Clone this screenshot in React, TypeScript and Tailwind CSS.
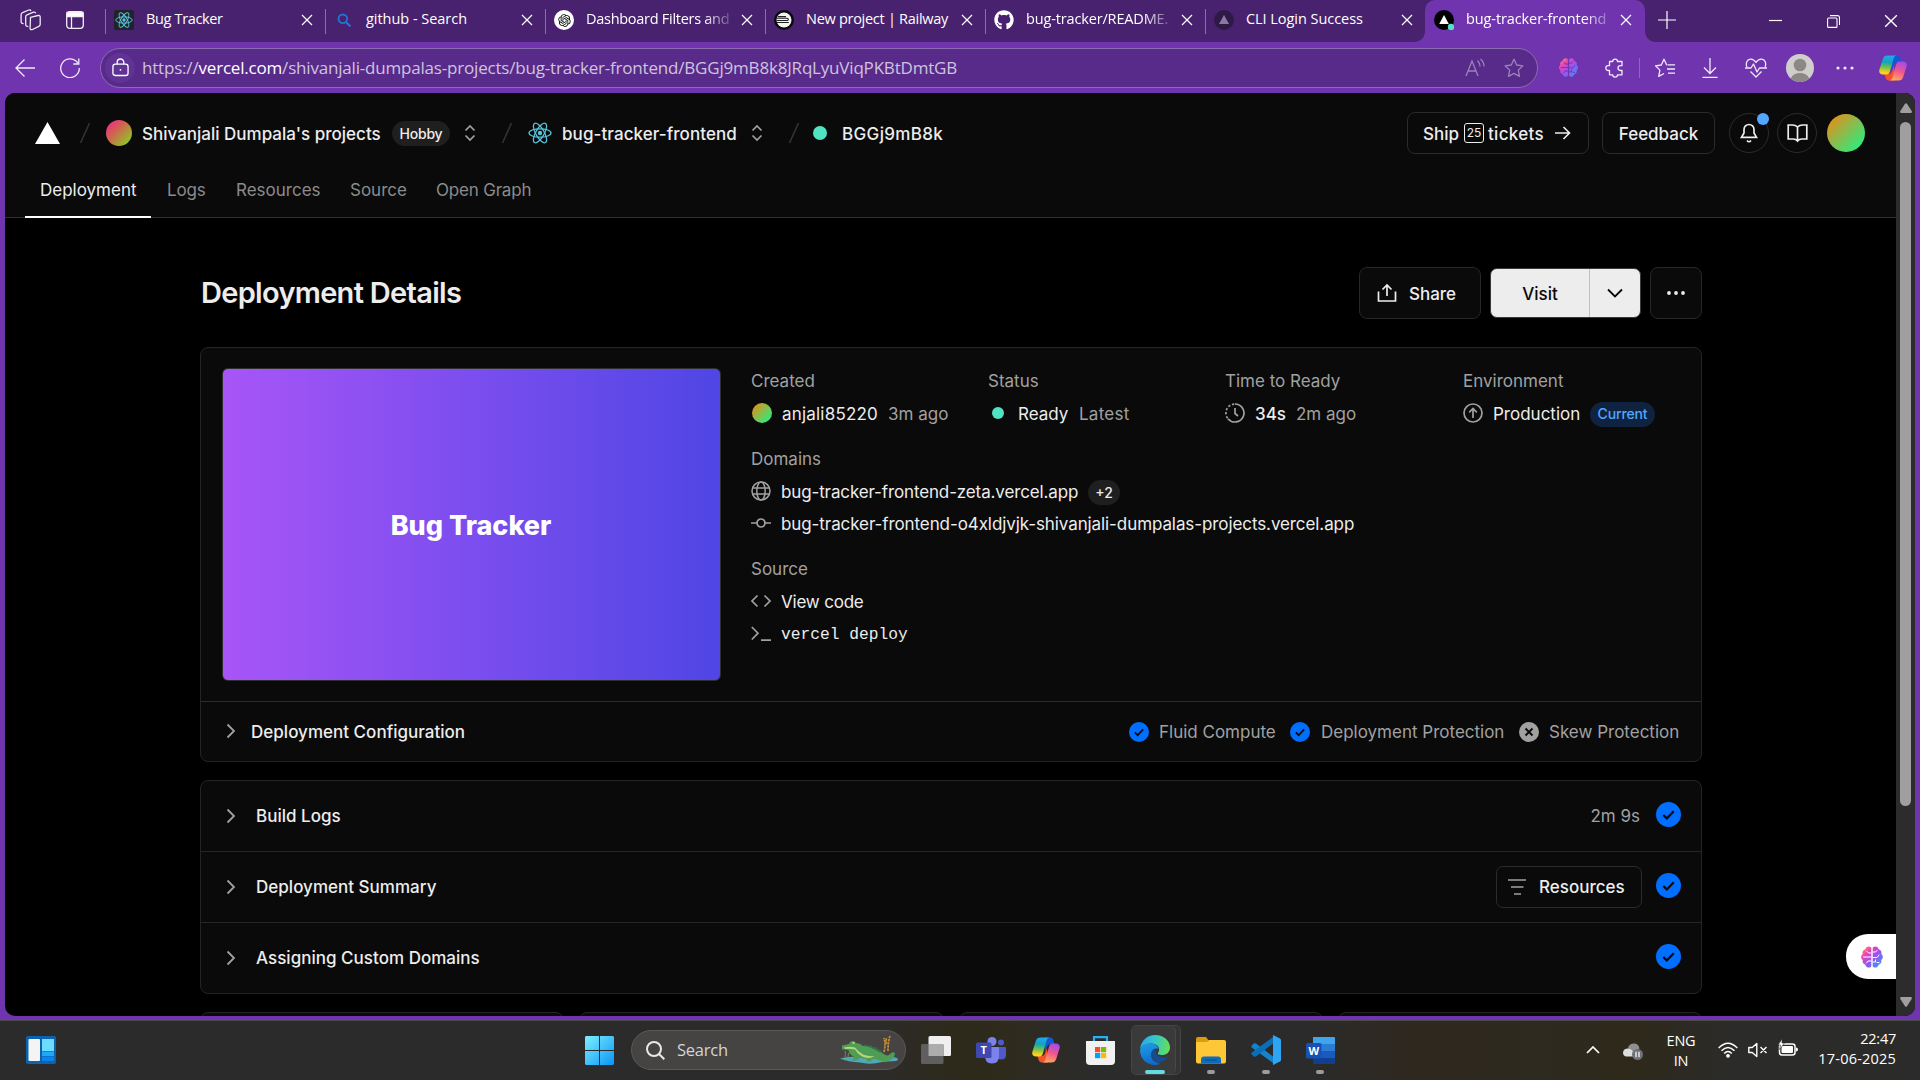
import React from 'react';
import type { ReactNode } from 'react';
import { FaGithub } from 'react-icons/fa';
import { RiOpenaiFill } from 'react-icons/ri';

type IconProps = { className?: string };

/* ---------- shared icons ---------- */

function ReactLogo({ className = '' }: IconProps) {
  return (
    <svg viewBox="0 0 24 24" className={className} fill="none" stroke="#58c4dc" strokeWidth="1.25">
      <ellipse cx="12" cy="12" rx="11" ry="4.2" />
      <ellipse cx="12" cy="12" rx="11" ry="4.2" transform="rotate(60 12 12)" />
      <ellipse cx="12" cy="12" rx="11" ry="4.2" transform="rotate(120 12 12)" />
      <circle cx="12" cy="12" r="2.2" fill="#58c4dc" stroke="none" />
    </svg>
  );
}

function CloseIcon({ className = '' }: IconProps) {
  return (
    <svg viewBox="0 0 12 12" className={className} fill="none" stroke="currentColor" strokeWidth="1.2">
      <path d="M1 1l10 10M11 1L1 11" />
    </svg>
  );
}

function BrainIcon({ className = '', line }: { className?: string; line: string }) {
  const id = 'brain' + line.slice(1);
  return (
    <svg viewBox="0 0 24 24" className={className}>
      <defs>
        <linearGradient id={id} x1="0" y1="0" x2="1" y2="1">
          <stop offset="0.05" stopColor="#ff9a3d" />
          <stop offset="0.3" stopColor="#e83fc0" />
          <stop offset="0.6" stopColor="#8a5cf0" />
          <stop offset="1" stopColor="#2aa5ff" />
        </linearGradient>
      </defs>
      <path
        fill={`url(#${id})`}
        d="M11.3 2.6C9 .4 5.8 1.6 5.4 4.2 3 4.8 2 7 2.7 9 .6 10.5.6 13.5 2.7 15c-.6 2.2.6 4.2 2.7 4.7.5 2.800 3.800 4 5.900 1.700V2.600Zm1.400 0c2.300-2.200 5.500-1 5.900 1.600 2.400.6 3.400 2.800 2.700 4.800 2.100 1.500 2.100 4.500 0 6 .6 2.200-.6 4.200-2.700 4.700-.5 2.800-3.800 4-5.900 1.700V2.600Z"
      />
      <g fill="none" stroke={line} strokeWidth="1" strokeLinecap="round">
        <path d="M11 8H8.500L6.500 6M11 12H3.500M11 16H8l-1.500 2M13 7h2.500l1.500-1.500M13 12.500h4l2-2.500M13 17h2.500v-2M17 17.500h2" />
      </g>
    </svg>
  );
}

function CopilotIcon({ className = '', id }: { className?: string; id: string }) {
  return (
    <svg viewBox="0 0 28 28" className={className}>
      <defs>
        <linearGradient id={id + 'a'} x1="0.4" y1="0" x2="0.3" y2="1">
          <stop offset="0" stopColor="#22a7f2" />
          <stop offset="0.35" stopColor="#12a5b8" />
          <stop offset="0.65" stopColor="#7fc342" />
          <stop offset="0.9" stopColor="#ffd21f" />
        </linearGradient>
        <linearGradient id={id + 'b'} x1="0.7" y1="0" x2="0.4" y2="1">
          <stop offset="0" stopColor="#a04bea" />
          <stop offset="0.5" stopColor="#f2558f" />
          <stop offset="1" stopColor="#ffa85e" />
        </linearGradient>
      </defs>
      <path fill="#1458d4" d="M12 1.500h6c2 0 3 1 3.500 3l1 3.800h-4c-2 0-3 1-3.600 3L13 16z" />
      <path fill="#f4522d" d="M16 26.500h-6c-2 0-3-1-3.500-3L5.500 20h4c2 0 3-1 3.600-3L15 12z" />
      <path
        fill={`url(#${id}a)`}
        d="M8.500 1.500H18c-1.800 0-2.800 1-3.400 3L10.900 17.500c-.6 2-1.600 3-3.400 3H4c-3 0-4.300-2-3.600-4.800L3.800 5C4.600 2.600 6 1.500 8.500 1.500Z"
      />
      <path
        fill={`url(#${id}b)`}
        d="M19.500 26.500H10c1.800 0 2.800-1 3.400-3l3.700-13c.6-2 1.600-3 3.400-3H24c3 0 4.300 2 3.600 4.800L24.200 23c-.8 2.400-2.200 3.500-4.700 3.500Z"
      />
    </svg>
  );
}

function UpDown({ className = '' }: IconProps) {
  return (
    <svg viewBox="0 0 14 18" className={className} fill="none" stroke="#a1a1a1" strokeWidth="1.700">
      <path d="M2.500 6.500L7 2l4.500 4.500M2.500 11.500L7 16l4.500-4.500" />
    </svg>
  );
}

function Slash({ className = '' }: IconProps) {
  return (
    <svg viewBox="0 0 12 22" className={className} stroke="#333333" strokeWidth="1.600">
      <path d="M10.500 1L1.500 21" />
    </svg>
  );
}

function ChevronRight({ className = '' }: IconProps) {
  return (
    <svg viewBox="0 0 10 16" className={className} fill="none" stroke="#a1a1a1" strokeWidth="1.800">
      <path d="M1.500 1.500L8 8l-6.500 6.500" />
    </svg>
  );
}

function CheckCircle({ className = '' }: IconProps) {
  return (
    <svg viewBox="0 0 24 24" className={className}>
      <circle cx="12" cy="12" r="12" fill="#006efe" />
      <path d="M7 12.500l3.400 3.300L17 8.800" fill="none" stroke="#0a0a0a" strokeWidth="2.200" />
    </svg>
  );
}

/* ---------- browser chrome ---------- */

const tabs: { title: string; textClass: string; fade?: boolean; icon: ReactNode }[] = [
  {
    title: 'Bug Tracker',
    textClass: 'tracking-[-0.35px]',
    icon: (
      <span className="flex size-5 items-center justify-center rounded-[2px] bg-[#20232a]">
        <ReactLogo className="size-[18px]" />
      </span>
    ),
  },
  {
    title: 'github - Search',
    textClass: 'tracking-[-0.03px]',
    icon: (
      <svg viewBox="0 0 20 20" className="size-5" fill="none" stroke="#1a78d6" strokeWidth="1.800">
        <circle cx="8.800" cy="8.800" r="4.300" />
        <path d="M12 12l4.500 4.500" strokeWidth="2.200" />
      </svg>
    ),
  },
  {
    title: 'Dashboard Filters and',
    textClass: 'tracking-[-0.28px]',
    fade: true,
    icon: (
      <span className="flex size-5 items-center justify-center rounded-full bg-white">
        <RiOpenaiFill className="size-[15px] text-black" />
      </span>
    ),
  },
  {
    title: 'New project | Railway',
    textClass: 'tracking-[-0.28px]',
    icon: (
      <svg viewBox="0 0 20 20" className="size-5">
        <circle cx="10" cy="10" r="10" fill="#0b0b0b" />
        <circle cx="10" cy="10" r="7.500" fill="#f4f4f4" />
        <path d="M3 8.200h9.500c2 0 2.500 2 .5 2.300H2.600M2.800 12.500h12M4 6.600h8" stroke="#222" strokeWidth="1.100" fill="none" />
      </svg>
    ),
  },
  {
    title: 'bug-tracker/README.',
    textClass: 'tracking-[-0.15px]',
    fade: true,
    icon: <FaGithub className="size-5 text-white" />,
  },
  {
    title: 'CLI Login Success',
    textClass: 'tracking-[-0.05px]',
    icon: (
      <svg viewBox="0 0 20 20" className="size-5">
        <circle cx="10" cy="10" r="10" fill="#2f1a47" />
        <path d="M10 5l5 9H5z" fill="#8d78a5" />
      </svg>
    ),
  },
];

function TabTitle({ title, fade, textClass }: { title: string; fade?: boolean; textClass: string }) {
  return (
    <span
      className={
        'mb-0.5 ml-3 w-[146px] text-[14.5px] leading-[22px] whitespace-nowrap text-white ' +
        textClass +
        (fade ? ' [mask-image:linear-gradient(to_right,black_118px,transparent_150px)]' : '')
      }
    >
      {title}
    </span>
  );
}

function TabStrip() {
  return (
    <div className="flex h-[42px] bg-[#48226e] text-white">
      <div className="flex w-[105px] items-center pb-0.5 pl-5">
        <svg viewBox="0 0 22 22" className="size-[22px]" fill="none" stroke="#efe8f6" strokeWidth="1.300" strokeLinejoin="round">
          <path d="M10.500 8.300l7.500-1.800q2-.3 2.200 1.300v7.500q0 1.500-1.400 2l-6.300 3.200q-2 .7-2.400-1z" />
          <path d="M8.300 17.300q-2.300.4-2.600-1.300V7.800q0-1.400 1.300-1.900l6.500-2.700q1.700-.5 2.300 1.100" />
          <path d="M3.600 14.700q-2.200.2-2.500-1.500V5.700q.1-1.500 1.400-2L8.800 1q1.600-.5 2.200.9" />
        </svg>
        <svg viewBox="0 0 18 18" className="ml-6 size-[18px]" fill="none" stroke="#f3eef8" strokeWidth="1.300">
          <rect x="0.700" y="0.700" width="16.600" height="16.600" rx="3" />
          <path d="M1 1.500h16v4H1z" fill="#fff" />
          <path d="M5.500 6v11" />
        </svg>
      </div>
      {tabs.map((tab) => (
        <div key={tab.title} className="flex w-[220px] items-center">
          <span className="mt-[9px] h-[25px] w-px self-start bg-[#8a70a6]" />
          <span className="flex h-10 items-center self-start pl-2">
            {tab.icon}
            <TabTitle title={tab.title} fade={tab.fade} textClass={tab.textClass} />
            <CloseIcon className="ml-[9px] size-3" />
          </span>
        </div>
      ))}
      <div className="relative flex w-[220px] rounded-t-[10px] bg-[#6f34ae]">
        <span className="absolute bottom-0 -left-[10px] size-[10px] bg-[radial-gradient(circle_at_0_0,transparent_9.500px,#6f34ae_10px)]" />
        <span className="absolute -right-[10px] bottom-0 size-[10px] bg-[radial-gradient(circle_at_100%_0,transparent_9.500px,#6f34ae_10px)]" />
        <span className="flex h-10 items-center pl-[9px]">
          <svg viewBox="0 0 20 20" className="size-5">
            <circle cx="10" cy="10" r="10" fill="#000" />
            <path d="M10 5l4.800 9H5.200z" fill="#fff" />
            <circle cx="17" cy="17" r="3.200" fill="#50e3c2" />
          </svg>
          <TabTitle title="bug-tracker-frontend" fade textClass="tracking-[-0.1px]" />
          <CloseIcon className="ml-[8px] size-3" />
        </span>
      </div>
      <svg viewBox="0 0 18 18" className="mt-[11px] ml-[13px] size-[18px]" stroke="#fff" strokeWidth="1.200">
        <path d="M9 0v18M0 9h18" />
      </svg>
      <svg viewBox="0 0 13 13" className="mt-[14px] ml-[93px] size-[13px]" stroke="#fff" strokeWidth="1.200">
        <path d="M0 6.500h13" />
      </svg>
      <svg viewBox="0 0 13 13" className="mt-[15px] ml-[45px] size-[13px]" fill="none" stroke="#fff" strokeWidth="1.100">
        <rect x="0.600" y="3" width="9.400" height="9.400" rx="1" />
        <path d="M3 .6h7.500q2 0 2 2v7.400" />
      </svg>
      <CloseIcon className="mt-[14px] ml-[44px] size-[14px]" />
    </div>
  );
}

function Toolbar() {
  return (
    <div className="flex h-[51px] items-center bg-[#6f34ae] text-[#f1eaf8]">
      <svg viewBox="0 0 20 20" className="ml-[15px] size-5" fill="none" stroke="currentColor" strokeWidth="1.300">
        <path d="M20 10H1M9.500 1.500L1 10l8.500 8.500" />
      </svg>
      <svg viewBox="0 0 20 20" className="ml-[25px] size-5" fill="none" stroke="currentColor" strokeWidth="1.300">
        <path d="M18 5.500A9.300 9.300 0 1 0 19.300 10" />
        <path d="M18.800 .5v5.500h-5.500" />
      </svg>
      <div className="ml-[20px] flex h-10 w-[1438px] items-center rounded-full border border-[#8b6cb0] bg-[#582b8b]">
        <span className="ml-1 flex size-[30px] items-center justify-center rounded-full bg-[#603295]">
          <svg viewBox="0 0 18 20" className="h-[19px] w-[17px]" fill="none" stroke="#fff" strokeWidth="1.400">
            <rect x="1" y="6.500" width="16" height="12" rx="2.500" />
            <path d="M5.500 6.500V4.500a3.500 3.500 0 0 1 7 0v2" />
            <circle cx="9" cy="12.500" r="1" fill="#fff" stroke="none" />
          </svg>
        </span>
        <span className="ml-[7px] w-[1323px] text-[17px] tracking-[-0.19px] whitespace-nowrap text-[#cfc3de]">
          https://<span className="text-white">vercel.com</span>
          /shivanjali-dumpalas-projects/bug-tracker-frontend/BGGj9mB8k8JRqLyuViqPKBtDmtGB
        </span>
        <svg viewBox="0 0 20 20" className="size-5" fill="none" stroke="#9b82b9" strokeWidth="1.300">
          <path d="M1 18L7 3l6 15M3.200 13h7.600M12.500 2.500q2.500 2.500 2.500 6M15.500 1q3.500 3 3.500 7.500" />
        </svg>
        <svg viewBox="0 0 20 20" className="ml-[19px] size-5" fill="none" stroke="#9b82b9" strokeWidth="1.300" strokeLinejoin="round">
          <path d="M10 1.200l2.700 5.800 6.200.8-4.600 4.300 1.200 6.300-5.500-3-5.500 3 1.200-6.300L1.100 7.800l6.200-.8z" />
        </svg>
      </div>
      <BrainIcon className="ml-[20px] size-[21px]" line="#6f34ae" />
      <svg viewBox="0 0 20 20" className="ml-[26px] size-5" fill="none" stroke="currentColor" strokeWidth="1.300" strokeLinejoin="round">
        <path d="M4.500 3.500h3.200a2.400 2.400 0 0 1 4.800 0H17v4.200h-1.600a2.300 2.300 0 0 0 0 4.800H17v4.300h-4.500a2.400 2.400 0 0 1-4.800 0H4.500v-4.300H3.200a2.400 2.400 0 0 1 0-4.800h1.300z" />
      </svg>
      <span className="ml-[14px] h-5 w-px bg-[#8f66be]" />
      <svg viewBox="0 0 20 20" className="ml-[15px] size-5" fill="none" stroke="currentColor" strokeWidth="1.300" strokeLinejoin="round">
        <path d="M12 6.800h-.4L9 1.200 6.300 7l-5.800.8 4.400 4.300-1.200 6.300L9 15.500M12.500 6.800H20M12 11h8M13 15.200h7" />
      </svg>
      <svg viewBox="0 0 16 20" className="ml-[27px] h-5 w-4" fill="none" stroke="currentColor" strokeWidth="1.300">
        <path d="M8 0v15M2 9.500L8 15.500l6-6M.5 19.300h15" />
      </svg>
      <svg viewBox="0 0 22 20" className="ml-[27px] h-5 w-[22px]" fill="none" stroke="currentColor" strokeWidth="1.300" strokeLinejoin="round">
        <path d="M2 9C.3 5.500 2 1.200 5.800 1.200 8.500 1.200 10 3 11 4.500 12 3 13.500 1.200 16.200 1.200 20 1.200 21.700 5.500 20 9M0 10h6l2.500-4 3.500 8 2.500-4H22M5.500 13.500L11 19l5.500-5.500" />
      </svg>
      <svg viewBox="0 0 28 28" className="ml-[19px] size-7">
        <circle cx="14" cy="14" r="14" fill="#d0cecd" />
        <circle cx="14" cy="11" r="6.300" fill="#8b8886" />
        <path d="M4.800 24.500Q7 19 14 19t9.200 5.500A14 14 0 0 1 4.800 24.500z" fill="#8b8886" />
      </svg>
      <svg viewBox="0 0 18 4" className="ml-[22px] h-1 w-[18px]" fill="currentColor">
        <circle cx="2" cy="2" r="1.600" />
        <circle cx="9" cy="2" r="1.600" />
        <circle cx="16" cy="2" r="1.600" />
      </svg>
      <CopilotIcon className="ml-[25px] size-7" id="cpTop" />
    </div>
  );
}

/* ---------- page header ---------- */

function PageHeader() {
  return (
    <header className="h-[125px] border-b border-[#2e2e2e] bg-[#0a0a0a] text-[#ededed]">
      <div className="flex h-20 items-center text-[17px] font-medium whitespace-nowrap">
        <svg viewBox="0 0 25 22" className="ml-[30px] h-[22px] w-[25px]" fill="#fff">
          <path d="M12.500 0L25 22H0z" />
        </svg>
        <Slash className="ml-[19px] h-[22px] w-3" />
        <span className="ml-[15px] size-[26px] rounded-full bg-[linear-gradient(135deg,#f0288a_5%,#d0634f_40%,#7ee01c_100%)]" />
        <span className="ml-[10px] w-[240px] pt-1">Shivanjali Dumpala's projects</span>
        <span className="ml-[10px] flex h-[25px] w-[58px] items-center justify-center rounded-full bg-[#1f1f1f] text-[14px] tracking-[-0.2px]">
          Hobby
        </span>
        <UpDown className="ml-[13px] h-[18px] w-[14px]" />
        <Slash className="ml-[24px] h-[22px] w-3" />
        <ReactLogo className="ml-[15px] size-6" />
        <span className="ml-[10px] w-[175px] pt-1 tracking-[0.08px]">bug-tracker-frontend</span>
        <UpDown className="ml-[13px] h-[18px] w-[14px]" />
        <Slash className="ml-[24px] h-[22px] w-3" />
        <span className="ml-[13px] size-[14px] rounded-full bg-[#50e3c2]" />
        <span className="ml-[15px] w-[101px] pt-1 tracking-[0.35px]">BGGj9mB8k</span>
        <div className="ml-auto flex items-center pr-[31px]">
          <span className="flex h-[42px] w-[182px] items-center rounded-[8px] border border-[#2b2b2b] pl-[15px]">
            <span className="pt-1">Ship</span>
            <span className="ml-[5px] flex h-5 w-5 items-center justify-center rounded-[3px] border-[1.500px] border-[#ededed] text-[12px] leading-none font-normal">
              25
            </span>
            <span className="ml-1 pt-1 tracking-[0.3px]">tickets</span>
            <svg viewBox="0 0 16 16" className="ml-[11px] size-4" fill="none" stroke="currentColor" strokeWidth="1.600">
              <path d="M0 8h14.500M8.500 2l6 6-6 6" />
            </svg>
          </span>
          <span className="ml-[13px] flex h-[42px] w-[113px] items-center justify-center rounded-[8px] border border-[#2b2b2b] pt-1">
            Feedback
          </span>
          <span className="relative ml-[14px] flex size-10 items-center justify-center rounded-full border border-[#2b2b2b]">
            <svg viewBox="0 0 20 20" className="size-5" fill="none" stroke="currentColor" strokeWidth="1.700">
              <path d="M5 6.500a5 5 0 0 1 10 0V10l2.500 4.300h-15L5 10zM8 17.500q2 2.500 4 0" />
            </svg>
            <span className="absolute -top-px right-[-1px] size-3 rounded-full bg-[#52a8ff]" />
          </span>
          <span className="mr-px ml-2 flex size-10 items-center justify-center rounded-full border border-[#2b2b2b]">
            <svg viewBox="0 0 21 20" className="h-5 w-[21px]" fill="none" stroke="currentColor" strokeWidth="1.700">
              <path d="M10.500 4Q8.500 2 5.500 2H1.200v14h5Q9 16 10.500 18 12 16 14.800 16h5V2h-4.300q-3 0-5 2zM10.500 4v13.500" />
            </svg>
          </span>
          <span className="ml-[9px] size-[38px] rounded-full bg-[linear-gradient(135deg,#f08a10_5%,#8fb94a_45%,#1cf584_95%)]" />
        </div>
      </div>
      <nav className="flex h-[45px] pl-5 text-[17px] whitespace-nowrap text-[#8b8b8b]">
        <span className="h-[45px] w-[126px] border-b-2 border-white pt-[5px] pl-[15px] text-[#ededed]">Deployment</span>
        <span className="w-[68px] pt-[5px] pl-[16px] tracking-[-0.2px]">Logs</span>
        <span className="w-[115px] pt-[5px] pl-[17px]">Resources</span>
        <span className="w-[86px] pt-[5px] pl-[16px]">Source</span>
        <span className="pt-[5px] pl-[16px] tracking-[-0.2px]">Open Graph</span>
      </nav>
    </header>
  );
}

/* ---------- deployment content ---------- */

function TitleRow() {
  return (
    <div className="flex h-[52px] items-center text-[17px] font-medium whitespace-nowrap">
      <h1 className="mb-0.5 ml-px text-[29px] leading-none font-semibold tracking-[-0.7px] text-[#ededed]">
        Deployment Details
      </h1>
      <span className="ml-auto flex h-[52px] w-[122px] items-center rounded-[8px] border border-[#272727] bg-[#0a0a0a] pl-[17px] text-[#ededed]">
        <svg viewBox="0 0 20 20" className="size-5" fill="none" stroke="currentColor" strokeWidth="1.700">
          <path d="M1.500 8.500V18h17V8.500M10 13V2.500M5.500 6.500L10 2l4.500 4.500" />
        </svg>
        <span className="ml-3 pt-[3px]">Share</span>
      </span>
      <span className="ml-[9px] flex h-[50px] w-[151px] overflow-hidden rounded-[7px] border border-[#3a3a3a] bg-[#ededed] text-[#0a0a0a]">
        <span className="flex w-[99px] items-center justify-center border-r border-[#c0c0c0] pt-[3px]">Visit</span>
        <span className="flex flex-1 items-center justify-center">
          <svg viewBox="0 0 16 10" className="h-[10px] w-4" fill="none" stroke="currentColor" strokeWidth="1.800">
            <path d="M1 1.500l7 7 7-7" />
          </svg>
        </span>
      </span>
      <span className="ml-[9px] flex h-[52px] w-[52px] items-center justify-center rounded-[8px] border border-[#272727] bg-[#0a0a0a] text-[#ededed]">
        <svg viewBox="0 0 18 4" className="h-1 w-[18px]" fill="currentColor">
          <circle cx="2" cy="2" r="1.900" />
          <circle cx="9" cy="2" r="1.900" />
          <circle cx="16" cy="2" r="1.900" />
        </svg>
      </span>
    </div>
  );
}

function Field({ label, children, className = '' }: { label: string; children: ReactNode; className?: string }) {
  return (
    <div className={className}>
      <div className="h-[33px] leading-6 text-[#a1a1a1]">{label}</div>
      {children}
    </div>
  );
}

function Details() {
  return (
    <div className="ml-[30px] flex flex-col pt-[21px] text-[17px] leading-6 whitespace-nowrap text-[#ededed]">
      <div className="flex">
        <Field label="Created" className="w-[237px]">
          <div className="flex h-6 items-center">
            <span className="ml-px size-5 -translate-y-px rounded-full bg-[linear-gradient(135deg,#f08a10_5%,#8fb94a_45%,#1cf584_95%)]" />
            <span className="ml-[10px] w-[97px] tracking-[0.2px]">anjali85220</span>
            <span className="ml-[9px] text-[#a1a1a1]">3m ago</span>
          </div>
        </Field>
        <Field label="Status" className="w-[237px]">
          <div className="flex h-6 items-center">
            <span className="ml-[4px] size-3 -translate-y-px rounded-full bg-[#50e3c2]" />
            <span className="ml-[14px] w-[51px]">Ready</span>
            <span className="ml-[10px] tracking-[0.25px] text-[#a1a1a1]">Latest</span>
          </div>
        </Field>
        <Field label="Time to Ready" className="w-[238px]">
          <div className="flex h-6 items-center">
            <svg viewBox="0 0 20 20" className="size-5 -translate-y-px" fill="none" stroke="#a1a1a1" strokeWidth="1.700">
              <path d="M10 1a9 9 0 1 1-7 14.700" />
              <path d="M2.600 15.200A9 9 0 0 1 10 1" strokeDasharray="2.300 1.800" />
              <path d="M10 5v5.500l3 2.500" />
            </svg>
            <span className="ml-[10px] w-[31px] font-medium">34s</span>
            <span className="ml-[10px] text-[#a1a1a1]">2m ago</span>
          </div>
        </Field>
        <Field label="Environment">
          <div className="flex h-6 items-center">
            <svg viewBox="0 0 20 20" className="size-5 -translate-y-px" fill="none" stroke="#a1a1a1" strokeWidth="1.700">
              <circle cx="10" cy="10" r="9" />
              <path d="M10 15V5.500M6.200 9.300L10 5.500l3.800 3.800" />
            </svg>
            <span className="ml-[10px] w-[87px]">Production</span>
            <span className="ml-[10px] flex h-[25px] w-[65px] items-center justify-center rounded-full bg-[#0f2341] text-[14px] font-medium tracking-[-0.12px] text-[#52a8ff]">
              Current
            </span>
          </div>
        </Field>
      </div>
      <Field label="Domains" className="mt-[21px]">
        <div className="flex h-8 items-start">
          <svg viewBox="0 0 20 20" className="mt-[1px] size-5" fill="none" stroke="#a1a1a1" strokeWidth="1.500">
            <circle cx="10" cy="10" r="9" />
            <ellipse cx="10" cy="10" rx="4.200" ry="9" />
            <path d="M1.800 7h16.400M1.800 13h16.400" />
          </svg>
          <span className="ml-[10px] w-[298px] tracking-[-0.13px]">bug-tracker-frontend-zeta.vercel.app</span>
          <span className="ml-[9px] flex h-[25px] w-8 items-center justify-center rounded-full bg-[#1f1f1f] text-[14px] font-medium">
            +2
          </span>
        </div>
        <div className="flex h-6 items-center">
          <svg viewBox="0 0 20 20" className="size-5 -translate-y-px" fill="none" stroke="#a1a1a1" strokeWidth="1.700">
            <circle cx="10" cy="10" r="4" />
            <path d="M0 10h6M14 10h6" />
          </svg>
          <span className="ml-[10px] tracking-[-0.09px]">
            bug-tracker-frontend-o4xldjvjk-shivanjali-dumpalas-projects.vercel.app
          </span>
        </div>
      </Field>
      <Field label="Source" className="mt-[21px]">
        <div className="flex h-[33px] items-start">
          <svg viewBox="0 0 20 20" className="mt-[1px] size-5" fill="none" stroke="#a1a1a1" strokeWidth="1.700">
            <path d="M6.500 4.500L1 10l5.500 5.500M13.500 4.500L19 10l-5.500 5.500" />
          </svg>
          <span className="ml-[10px] tracking-[-0.2px]">View code</span>
        </div>
        <div className="flex h-6 items-center">
          <svg viewBox="0 0 20 20" className="size-5 -translate-y-px" fill="none" stroke="#a1a1a1" strokeWidth="1.700">
            <path d="M.8 3L7 9.200.8 15.500M10 16.200h10" />
          </svg>
          <span className="ml-[10px] font-['Liberation_Mono',monospace] text-[16.250px]">vercel deploy</span>
        </div>
      </Field>
    </div>
  );
}

function DeploymentCard() {
  return (
    <section className="mt-7 rounded-[8px] border border-[#242424] bg-[#0a0a0a]">
      <div className="flex h-[353px] pl-[21px]">
        <div className="mt-[20px] flex h-[313px] w-[499px] items-center justify-center rounded-[6px] border border-[#2e2e2e] bg-[linear-gradient(to_right,#a855f7,#4f46e5)]">
          <span className="pt-[3px] pr-px text-[27px] font-extrabold text-white">Bug Tracker</span>
        </div>
        <Details />
      </div>
      <div className="flex h-[60px] items-center border-t border-[#2b2b2b] pr-5 pl-[25px] text-[17px] whitespace-nowrap">
        <ChevronRight className="mb-px h-4 w-[10px]" />
        <span className="ml-[15px] pt-[3px] font-medium tracking-[0.02px] text-[#ededed]">Deployment Configuration</span>
        <div className="ml-auto flex items-center text-[#a1a1a1]">
          <CheckCircle className="size-5" />
          <span className="ml-[10px] w-[116px] pt-[2px]">Fluid Compute</span>
          <CheckCircle className="ml-[15px] size-5" />
          <span className="ml-[11px] w-[183px] pt-[2px]">Deployment Protection</span>
          <svg viewBox="0 0 20 20" className="ml-[15px] size-5">
            <circle cx="10" cy="10" r="10" fill="#a1a1a1" />
            <path d="M6.500 6.500l7 7M13.500 6.500l-7 7" stroke="#0a0a0a" strokeWidth="1.900" />
          </svg>
          <span className="ml-[10px] w-[132px] pt-[2px]">Skew Protection</span>
        </div>
      </div>
    </section>
  );
}

function StepRow({ title, children }: { title: string; children?: ReactNode }) {
  return (
    <div className="box-content flex h-[70px] items-center pr-5 pl-[25px] whitespace-nowrap">
      <ChevronRight className="h-4 w-[10px]" />
      <span className="ml-5 pt-[2px] font-medium tracking-[0.02px] text-[#ededed]">{title}</span>
      <div className="ml-auto flex items-center">
        {children}
        <CheckCircle className="mb-1 ml-[14px] size-[25px]" />
      </div>
    </div>
  );
}

function Steps() {
  return (
    <section className="mt-[18px] divide-y divide-[#262626] rounded-[8px] border border-[#242424] bg-[#0a0a0a] text-[17px]">
      <StepRow title="Build Logs">
        <span className="mr-[2px] pt-[2px] text-[#a1a1a1]">2m 9s</span>
      </StepRow>
      <StepRow title="Deployment Summary">
        <span className="flex h-[42px] w-[146px] items-center rounded-[7px] border border-[#2b2b2b] pl-[10px] font-medium text-[#ededed]">
          <svg viewBox="0 0 20 20" className="size-5" stroke="#a1a1a1" strokeWidth="1.700">
            <path d="M1 3h18M4 10h12.500M7 17h7" />
          </svg>
          <span className="ml-3 pt-[2px]">Resources</span>
        </span>
      </StepRow>
      <StepRow title="Assigning Custom Domains" />
    </section>
  );
}

function Scrollbar() {
  return (
    <div className="flex w-[19px] flex-col items-center bg-[#2c2c2c]">
      <svg viewBox="0 0 12 10" className="mt-[10px] h-[10px] w-3" fill="#9f9f9f">
        <path d="M5 .8q1-1 2 0l4.800 7.500q.4 1.700-1 1.700H1.200q-1.400 0-1-1.700z" />
      </svg>
      <span className="mt-[9px] h-[684px] w-[11px] rounded-full bg-[#9f9f9f]" />
      <svg viewBox="0 0 12 10" className="mt-auto mb-[9px] h-[10px] w-3" fill="#9f9f9f">
        <path d="M5 9.200q1 1 2 0l4.800-7.500Q12.200 0 10.800 0H1.200Q-.2 0 .2 1.700z" />
      </svg>
    </div>
  );
}

/* ---------- taskbar ---------- */

function WidgetsIcon() {
  return (
    <svg viewBox="0 0 30 28" className="mt-[15px] ml-[26px] h-7 w-[30px]">
      <rect width="30" height="28" rx="2" fill="#0d62b0" />
      <rect x="2.500" y="3" width="11.500" height="22" rx="1" fill="#f4f4f4" />
      <path fill="#6adcfd" d="M16 3h12v12H16z" />
      <path fill="#1fa9f5" d="M16 15.500h12v4.500H16z" />
      <path fill="#0a84ea" d="M16 20.500h12V25H16z" />
    </svg>
  );
}

function WindowsIcon() {
  return (
    <svg viewBox="0 0 29 29" className="mt-[15px] ml-[529px] size-[29px]">
      <defs>
        <linearGradient id="winlogo" x1="0" y1="0" x2="29" y2="29" gradientUnits="userSpaceOnUse">
          <stop stopColor="#7df0ff" />
          <stop offset="1" stopColor="#0a94f6" />
        </linearGradient>
      </defs>
      <path fill="url(#winlogo)" d="M1 0h13v14H0V1zM15 0h13l1 1v13H15zM0 15h14v14H1l-1-1zM15 15h14v13l-1 1H15z" />
    </svg>
  );
}

function Crocodile() {
  return (
    <svg viewBox="0 0 58 30" className="h-[30px] w-[58px]">
      <path fill="#4fa9b8" d="M0 23.500q8-2.500 18-1.500 18-2 38 .5 4 2 0 3.500-8 .5-14 1-12 3-22 .5Q8 27 0 23.500z" />
      <path fill="none" stroke="#c28f3a" strokeWidth="1.700" strokeDasharray="2.500 .7" d="M44 17q2-8 0-14M48 16q0-9 2-15M46.500 9q-.5-3 0-6" />
      <path fill="none" stroke="#6c8a3c" strokeWidth="1.200" d="M5 22q1-4 0-6M8 22q0-3 1.500-5" />
      <path
        fill="#4f9d55"
        d="M2 10.500l7-1.500q1-3 4-3 2 0 3 2 4 0 7 3 5-1 9 1.500 7 1.500 11 6 5 3.500 7 .5 2.500-3 5-1-.5 6-7 8-7 1-12-2l-4 .5-1 2h-5l1-2.500-7-1-4 2.500h-4l2-3.500q-5-3-5-6.500-3-1.500-7-1z"
      />
      <path fill="#b5d878" d="M4 12.500q6-1.500 11 0 3 4 8 7 6 2.500 12 1.500-6 3.500-13 .5-5-3-7-7-5-1-10-.5z" />
      <path fill="#2f7747" d="M23 11l2.500-1.500L28 11l3-.8 2 2.200 3-.2 1.500 2.500 3 .3 1 2.500 2.500.8q-6-.8-10-4-5-3-11-3.300z" />
      <circle cx="13.500" cy="8" r="1" fill="#f3d34a" />
    </svg>
  );
}

function TaskViewIcon() {
  return (
    <svg viewBox="0 0 30 28" className="mt-[15px] ml-[15px] h-7 w-[30px]">
      <rect x="7.500" width="22.500" height="20" rx="1.500" fill="#efefef" />
      <rect y="8" width="22.500" height="20" rx="1.500" fill="#5f5f5f" />
      <path d="M7.500 8h15v12h-15z" fill="#acacac" />
    </svg>
  );
}

function TeamsIcon() {
  return (
    <svg viewBox="0 0 30 27" className="mt-4 ml-[25px] h-[27px] w-[30px]">
      <circle cx="25" cy="5.500" r="3" fill="#5059c9" />
      <circle cx="16" cy="4.500" r="4.500" fill="#7b83eb" />
      <path d="M20 10h9q1 0 1 1v7q0 4.500-5 4.500-3 0-5-3z" fill="#5059c9" />
      <path d="M9 10h13q1 0 1 1v8q0 7.500-7 7.500T9 19z" fill="#7b83eb" />
      <rect y="5.500" width="15.500" height="15.500" rx="1.500" fill="#4147b0" />
      <text x="7.800" y="17.300" textAnchor="middle" fontSize="11" fontWeight="700" fill="#fff" fontFamily="Open Sans, sans-serif">
        T
      </text>
    </svg>
  );
}

function StoreIcon() {
  return (
    <svg viewBox="0 0 29 29" className="mt-[15px] ml-[26px] size-[29px]">
      <path d="M8 6V1.200h13V6" fill="none" stroke="#29b0ee" strokeWidth="2.200" />
      <path d="M0 5h29v20q0 4-4 4H4q-4 0-4-4z" fill="#f1f1f1" />
      <path fill="#f25022" d="M9 11h5.200v5.200H9z" />
      <path fill="#7fba00" d="M15 11h5.200v5.200H15z" />
      <path fill="#00a4ef" d="M9 17h5.200v5.200H9z" />
      <path fill="#ffb900" d="M15 17h5.200v5.200H15z" />
    </svg>
  );
}

function EdgeIcon() {
  return (
    <svg viewBox="0 0 30 30" className="size-[30px]">
      <defs>
        <linearGradient id="edgeTop" x1="0" y1="0.400" x2="1" y2="0.500">
          <stop offset="0" stopColor="#2aa8e8" />
          <stop offset="0.500" stopColor="#35c8c8" />
          <stop offset="1" stopColor="#66e052" />
        </linearGradient>
        <linearGradient id="edgeMid" x1="0.300" y1="0" x2="0.500" y2="1">
          <stop offset="0" stopColor="#1f9ae6" />
          <stop offset="1" stopColor="#0f68c8" />
        </linearGradient>
      </defs>
      <path fill="#124d96" d="M11 15q-1 8 6 13 6-.5 11-5.500.5-.8-.5-.6Q22 24 18 21q-3-2.500-2-6.500z" />
      <path fill="url(#edgeTop)" d="M0 14C1 6 7 0 15 0c9 0 15 6 15 12.500 0 5-4 7.500-8 7.500-3 0-5-.8-4-2 2.800-4 .5-9-6-9.500C6 8.300 1.500 11 0 14z" />
      <path fill="url(#edgeMid)" d="M0 15C1 10.500 6 8 11 8.500c4 .3 7 2.500 7.500 5.500-4-1.500-7.500 1.500-7.500 5.500 0 5 4 8.500 9 9-1.500 1-3.500 1.500-5 1.500C6.500 30 0 23.500 0 15z" />
    </svg>
  );
}

function ExplorerIcon() {
  return (
    <svg viewBox="0 0 30 27" className="h-[27px] w-[30px]">
      <path d="M0 2q0-2 2-2h8l3 4v5H0z" fill="#dc9a0c" />
      <path d="M0 5h11l2-2h15q2 0 2 2v19.500q0 2-2 2H2q-2 0-2-2z" fill="#fdc736" />
      <path d="M5 26.500v-4q0-3 3-3h14q3 0 3 3v4z" fill="#0f6cbd" />
      <path d="M9 23h12" stroke="#0a4a86" strokeWidth="1" />
    </svg>
  );
}

function CodeIcon() {
  return (
    <svg viewBox="0 0 30 30" className="size-[30px]">
      <path d="M.8 10.500L3 8.300l2 .2L24 23v6.500L.8 12.500q-1-1 0-2z" fill="#1483cf" />
      <path d="M.8 19.500L3 21.700l2-.2L24 7V.5L.8 17.500q-1 1 0 2z" fill="#0a6fb8" />
      <path d="M22 0l7 3.500q1 .5 1 1.500v20q0 1-1 1.500L22 30z" fill="#2da5f2" />
    </svg>
  );
}

function WordIcon() {
  return (
    <svg viewBox="0 0 29 27" className="h-[27px] w-[29px]">
      <path fill="#41a5ee" d="M7 0h21q1 0 1 1v6H7z" />
      <path fill="#2b7cd3" d="M7 7h22v7H7z" />
      <path fill="#185abd" d="M7 14h22v7H7z" />
      <path fill="#103f91" d="M7 21h22v5q0 1-1 1H8q-1 0-1-1z" />
      <rect y="6" width="15.500" height="15.500" rx="1.500" fill="#1751b3" />
      <text x="7.700" y="17.700" textAnchor="middle" fontSize="11" fontWeight="700" fill="#fff" fontFamily="Open Sans, sans-serif">
        W
      </text>
    </svg>
  );
}

function RunningApp({ children, className = '' }: { children: ReactNode; className?: string }) {
  return (
    <span className={'flex h-[45px] w-[30px] flex-col items-center ' + className}>
      <span className="flex h-[30px] items-center">{children}</span>
      <span className="mt-[5px] h-1 w-2 rounded-full bg-[#9d9b99]" />
    </span>
  );
}

function Taskbar() {
  return (
    <footer className="flex h-[60px] border-t border-[#4b4b4b] bg-[linear-gradient(to_right,#2b2b2b_0%,#2b2b2b_45%,#2e2a1b_50%,#2f2b1c_52%,#2b2b2c_57%,#2b2b2b_68%,#30281f_74%,#2d2a20_80%,#2e291a_85%,#2b2b29_90%,#2b2b2b_100%)] text-white">
      <WidgetsIcon />
      <WindowsIcon />
      <div className="mt-[9px] ml-[17px] flex h-10 w-[275px] items-center rounded-full border border-[#5a5958] bg-[#454443] pl-[14px]">
        <svg viewBox="0 0 19 19" className="size-[19px]" fill="none" stroke="#e8e8e8" strokeWidth="2">
          <circle cx="8" cy="8" r="7" />
          <path d="M13 13l5.300 5.300" />
        </svg>
        <span className="ml-3 w-[163px] pt-px text-[16.500px] tracking-[-0.250px] text-[#d4d4d4]">Search</span>
        <Crocodile />
      </div>
      <TaskViewIcon />
      <TeamsIcon />
      <CopilotIcon className="mt-[15px] ml-[26px] size-7" id="cpTask" />
      <StoreIcon />
      <div className="mt-1 ml-[16px] flex h-[50px] w-[50px] rounded-[5px] border border-[#454545] bg-[#343434]">
        <div className="flex w-[44px] flex-col items-center rounded-[5px] border-r border-[#484848] bg-[#3a3a3a] pt-[9px] pl-[2px]">
          <EdgeIcon />
          <span className="mt-[5px] h-1 w-5 rounded-full bg-[#60dce0]" />
        </div>
      </div>
      <RunningApp className="mt-[14px] ml-[15px]">
        <ExplorerIcon />
      </RunningApp>
      <RunningApp className="mt-[14px] ml-[25px]">
        <CodeIcon />
      </RunningApp>
      <RunningApp className="mt-[14px] mr-px ml-[24px]">
        <WordIcon />
      </RunningApp>
      <svg viewBox="0 0 14 8" className="mt-[25px] ml-[250px] h-2 w-[14px]" fill="none" stroke="#fff" strokeWidth="1.700">
        <path d="M1 7l6-6 6 6" />
      </svg>
      <svg viewBox="0 0 20 17" className="mt-[22px] ml-[23px] h-[17px] w-5">
        <path d="M5 5q1-4.500 6-4.500 4.500 0 5.500 5l-9 5z" fill="#8f8f8f" />
        <path d="M3.500 13.500q-3.500-.3-3.500-4 .5-4 5-4 3 0 5 3l5 5z" fill="#dedede" />
        <circle cx="14.500" cy="11.500" r="5.500" fill="#6e7276" />
        <path d="M13 8.800v5.400M16 8.800v5.400" stroke="#fff" strokeWidth="1.200" />
      </svg>
      <div className="ml-[21px] flex w-[34px] flex-col items-center pt-[10px] text-[14.500px] leading-5 tracking-[-0.200px]">
        <span>ENG</span>
        <span>IN</span>
      </div>
      <svg viewBox="0 0 20 16" className="mt-[21px] ml-[20px] h-4 w-5" fill="none" stroke="#fff" strokeWidth="1.500">
        <path d="M.7 6Q10-3.500 19.300 6M3.500 8.800Q10 2 16.500 8.800M6.200 11.600Q10 7.500 13.800 11.600" />
        <circle cx="10" cy="13.800" r="1.900" fill="#fff" stroke="none" />
      </svg>
      <svg viewBox="0 0 20 16" className="mt-[21px] ml-[10px] h-4 w-5" fill="none" stroke="#fff" strokeWidth="1.400" strokeLinejoin="round">
        <path d="M.8 5.500h3.400L8.800 1.500v13L4.200 10.500H.8zM12.500 5l6 6M18.500 5l-6 6" />
      </svg>
      <svg viewBox="0 0 21 18" className="mt-[18px] ml-[10px] h-[18px] w-[21px]">
        <rect x="1.500" y="5" width="15.500" height="11" rx="2.500" fill="none" stroke="#fff" strokeWidth="1.500" />
        <rect x="3.500" y="7" width="11.500" height="7" rx="1" fill="#fff" />
        <path d="M18 8.500q2 0 2 2t-2 2z" fill="#fff" />
        <path d="M4 0L0 6h2.500l-1 4.500L6.500 4H4z" fill="#fff" stroke="#2b2b2b" strokeWidth=".6" />
      </svg>
      <div className="ml-auto flex flex-col items-end pt-[8px] pr-6 text-[14.500px] leading-5">
        <span className="tracking-[-0.250px]">22:47</span>
        <span className="tracking-[0.200px]">17-06-2025</span>
      </div>
    </footer>
  );
}

export default function App() {
  return (
    <div className="flex h-[1080px] w-[1920px] flex-col overflow-hidden bg-[#6f34ae] font-['Open_Sans','Noto_Sans',sans-serif]">
      <TabStrip />
      <Toolbar />
      <div className="mx-[5px] flex h-[923px] overflow-hidden rounded-[10px] bg-black font-['Inter',sans-serif]">
        <div className="relative w-[1891px] overflow-hidden">
          <PageHeader />
          <main className="ml-[195px] w-[1502px] pt-[49px]">
            <TitleRow />
            <DeploymentCard />
            <Steps />
            <div className="mt-[18px] grid grid-cols-4 gap-[15px]">
              <span className="h-20 rounded-[8px] border border-[#242424] bg-[#0a0a0a]" />
              <span className="h-20 rounded-[8px] border border-[#242424] bg-[#0a0a0a]" />
              <span className="h-20 rounded-[8px] border border-[#242424] bg-[#0a0a0a]" />
              <span className="h-20 rounded-[8px] border border-[#242424] bg-[#0a0a0a]" />
            </div>
          </main>
          <span className="absolute right-0 bottom-[37px] flex h-[45px] w-[50px] items-center rounded-l-[22px] bg-white pl-[14px]">
            <BrainIcon className="size-6" line="#ffffff" />
          </span>
        </div>
        <Scrollbar />
      </div>
      <div className="h-1" />
      <Taskbar />
    </div>
  );
}
